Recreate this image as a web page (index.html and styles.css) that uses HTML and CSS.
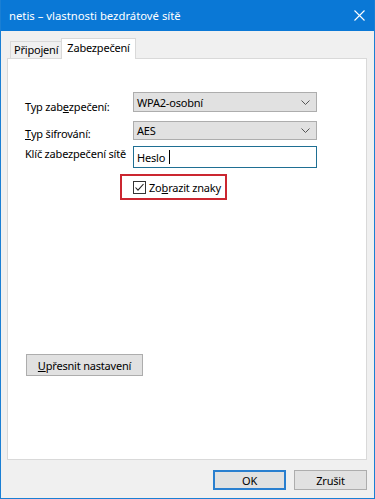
FILE: index.html
```html
<!DOCTYPE html>
<html lang="cs">
<head>
<meta charset="utf-8">
<title>netis – vlastnosti bezdrátové sítě</title>
<link rel="stylesheet" href="styles.css">
</head>
<body>
<div class="window">
  <div class="titlebar">
    <span class="title">netis – vlastnosti bezdrátové sítě</span>
    <svg class="close" width="11" height="11" viewBox="0 0 11 11"><path d="M0.5 0.5 L10.5 10.5 M10.5 0.5 L0.5 10.5" stroke="#fff" stroke-width="1.1" fill="none"/></svg>
  </div>
  <div class="body">
    <div class="tabs">
      <div class="tab">Připojení</div>
      <div class="tab active">Zabezpečení</div>
    </div>
    <div class="panel">
      <div class="form">
        <label class="lbl lbl-mid">Typ zab<u>e</u>zpečení:</label>
        <div class="select s1"><span>WPA2-osobní</span><svg width="9" height="5" viewBox="0 0 9 5"><path d="M0.5 0.5 L4.5 4.5 L8.5 0.5" stroke="#555" fill="none" stroke-width="1"/></svg></div>
        <label class="lbl lbl-mid"><u>T</u>yp šifrování:</label>
        <div class="select s2"><span>AES</span><svg width="9" height="5" viewBox="0 0 9 5"><path d="M0.5 0.5 L4.5 4.5 L8.5 0.5" stroke="#555" fill="none" stroke-width="1"/></svg></div>
        <label class="lbl lbl-top">Klíč zabezpečení sítě</label>
        <div class="input"><span>Heslo</span><i class="caret"></i></div>
      </div>
      <div class="highlight">
        <span class="check"><svg width="13" height="13" viewBox="0 0 13 13"><rect x="0.5" y="0.5" width="12" height="12" fill="#fff" stroke="#333"/><path d="M2.5 6.5 L5 9.2 L10.5 3" stroke="#222" stroke-width="1.1" fill="none"/></svg></span>
        <span>Zo<u>b</u>razit znaky</span>
      </div>
      <div class="btn adv"><u>U</u>přesnit nastavení</div>
    </div>
    <div class="footer">
      <div class="btn ok">OK</div>
      <div class="btn">Zrušit</div>
    </div>
  </div>
</div>
</body>
</html>
```
FILE: styles.css
```css
html, body {
  margin: 0;
  padding: 0;
  background: #f0f0f0;
}
.window {
  width: 375px;
  height: 499px;
  box-sizing: border-box;
  border: 1px solid #1a7fd4;
  border-top: none;
  background: #f0f0f0;
  font-family: "Noto Sans", "Open Sans", sans-serif;
  font-size: 11px;
  letter-spacing: -0.2px;
  color: #000;
  display: flex;
  flex-direction: column;
  overflow: hidden;
  white-space: nowrap;
}
.titlebar {
  height: 31px;
  background: #0a78d6;
  margin: 0 -1px;
  display: flex;
  align-items: center;
  justify-content: space-between;
  padding: 0 10px 0 9px;
  color: #fff;
}
.title {
  font-size: 11.3px;
  letter-spacing: 0;
}
.body {
  flex: 1;
  display: flex;
  flex-direction: column;
  padding: 7px 7px 0 6px;
}
.tabs {
  display: flex;
  align-items: flex-end;
  height: 20px;
  padding-left: 3px;
}
.tab {
  height: 16px;
  line-height: 15px;
  padding: 0 3px 0 3px;
  border: 1px solid #d9d9d9;
  border-bottom: none;
  border-right: none;
  background: #f0f0f0;
  color: #000;
}
.tab.active {
  height: 20px;
  line-height: 18px;
  padding: 0 5px 0 5px;
  background: #fff;
  border-right: 1px solid #d9d9d9;
  position: relative;
  z-index: 1;
  margin-bottom: -1px;
}
.panel {
  height: 402px;
  box-sizing: border-box;
  background: #fff;
  border: 1px solid #d9d9d9;
  padding: 33px 0 0 17px;
  display: flex;
  flex-direction: column;
  align-items: flex-start;
}
.form {
  display: grid;
  grid-template-columns: 108px 184px;
}
.lbl {
  display: flex;
}
.lbl-mid { align-items: center; }
.lbl-top { align-items: flex-start; padding-top: 1px; line-height: 14px; }
.select {
  box-sizing: border-box;
  height: 20px;
  background: #e1e1e1;
  border: 1px solid #adadad;
  display: flex;
  align-items: center;
  justify-content: space-between;
  padding: 0 6px 0 3px;
}
.s1 { margin-bottom: 9px; }
.s2 { height: 19px; margin-bottom: 6px; }
.input {
  box-sizing: border-box;
  height: 22px;
  border: 1px solid #1f6f93;
  background: #fff;
  display: flex;
  align-items: center;
  padding: 0 3px;
}
.caret {
  display: inline-block;
  width: 1px;
  height: 14px;
  background: #000;
  margin-left: 4px;
}
.highlight {
  margin: 6px 0 0 95px;
  box-sizing: border-box;
  width: 107px;
  height: 26px;
  border: 2px solid #cb2630;
  display: flex;
  align-items: center;
  padding-left: 11px;
  gap: 3px;
}
.check {
  display: flex;
}
.btn {
  box-sizing: border-box;
  height: 22px;
  border: 1px solid #adadad;
  background: #e1e1e1;
  display: flex;
  align-items: center;
  justify-content: center;
}
.adv {
  margin: 154px 0 0 1px;
  width: 117px;
}
.footer {
  display: flex;
  justify-content: flex-end;
  gap: 8px;
  padding: 10px 0 0 0;
}
.footer .btn {
  width: 73px;
  height: 20px;
}
.btn.ok {
  border: 2px solid #2a7fcf;
}
u {
  text-decoration-thickness: 1px;
  text-underline-offset: 1px;
}
```
